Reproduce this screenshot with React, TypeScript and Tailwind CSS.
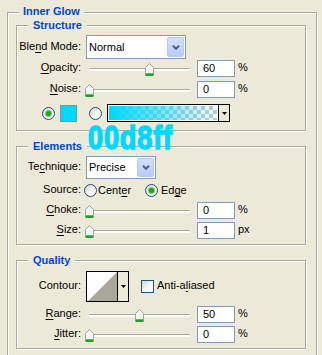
import React from "react";

const ETCH = "border border-[#ACA899] shadow-[inset_1px_1px_0_#fff,1px_1px_0_#fff]";

function Title({ children }: { children: React.ReactNode }) {
  return (
    <div className="absolute -top-[7px] left-[11px] px-[5px] bg-[#ECE9D8] font-bold text-[#0046D5] leading-[13px]">
      {children}
    </div>
  );
}

function Label({ children }: { children: React.ReactNode }) {
  return <div className="w-[64px] shrink-0 text-right mb-[2px]">{children}</div>;
}

function U({ children }: { children: React.ReactNode }) {
  return <span className="underline underline-offset-[2px]">{children}</span>;
}

function Chevron() {
  return (
    <svg width="8" height="5" viewBox="0 0 8 5">
      <polyline points="1,0.8 4,3.8 7,0.8" fill="none" stroke="#4D6185" strokeWidth="2" />
    </svg>
  );
}

function Select({ text, wide }: { text: string; wide: boolean }) {
  return (
    <div
      className={
        wide
          ? "ml-[5px] w-[100px] h-[24px] border border-[#7F9DB9] bg-white flex items-center justify-between pl-[2px] pr-[1px]"
          : "ml-[5px] w-[70px] h-[23px] border border-[#7F9DB9] bg-white flex items-center justify-between pl-[2px] pr-[1px]"
      }
    >
      <span>{text}</span>
      <div
        className={
          wide
            ? "w-[17px] h-[20px] rounded-[2px] border border-[#B4C7F6] bg-linear-to-b from-[#D3E0FE] to-[#B8CAF8] flex items-center justify-center"
            : "w-[17px] h-[19px] rounded-[2px] border border-[#B4C7F6] bg-linear-to-b from-[#D3E0FE] to-[#B8CAF8] flex items-center justify-center"
        }
      >
        <Chevron />
      </div>
    </div>
  );
}

function Thumb() {
  return (
    <svg width="9" height="13" viewBox="0 0 9 13">
      <path d="M0.5 4.5 L4.5 0.5 L8.5 4.5 L8.5 12.5 L0.5 12.5 Z" fill="#F4F4F0" stroke="#9AA6B3" />
      <path d="M1 10.5 H8" stroke="#49C849" />
      <path d="M0.5 11.5 H8.5 M1 12.5 H8" stroke="#21A121" />
    </svg>
  );
}

function Slider({ value }: { value: number }) {
  return (
    <div className="relative ml-[4px] w-[112px] h-[17px] shrink-0">
      <div className="mt-[8px] ml-[4px] w-[101px] h-[3px] border-t border-[#ACA899] bg-white rounded-[1px]" />
      <div className="absolute top-[3px] h-[13px]" style={{ left: value }}>
        <Thumb />
      </div>
    </div>
  );
}

function NumInput({ value }: { value: string }) {
  return (
    <div className="w-[38px] h-[17px] shrink-0 border border-[#7F9DB9] bg-white pl-[5px] flex items-center">
      {value}
    </div>
  );
}

function SliderRow({
  label,
  value,
  text,
  unit,
  cls,
}: {
  label: React.ReactNode;
  value: number;
  text: string;
  unit: string;
  cls: string;
}) {
  return (
    <div className={cls}>
      <Label>{label}</Label>
      <Slider value={value} />
      <NumInput value={text} />
      <span className="ml-[3px] mb-[2px]">{unit}</span>
    </div>
  );
}

function Radio({ checked }: { checked: boolean }) {
  return (
    <div className="w-[13px] h-[13px] shrink-0 rounded-full border border-[#1C5180] bg-linear-to-br from-[#D4D3CC] via-[#F4F4F0] to-white flex items-center justify-center">
      {checked ? <div className="w-[5px] h-[5px] rounded-full bg-[#21A121] shadow-[0_0_0_1px_#6ED46E]" /> : null}
    </div>
  );
}

function DownArrow() {
  return (
    <svg width="5" height="3" viewBox="0 0 5 3">
      <polygon points="0,0 5,0 2.5,3" fill="#000" />
    </svg>
  );
}

export default function App() {
  return (
    <div className="relative w-[322px] h-[355px] overflow-hidden bg-[#ECE9D8] pt-[12px] pl-[7px] text-[11px] leading-[13px] text-black font-['Liberation_Sans',Arial,sans-serif]">
      <div className={"relative w-[310px] h-[360px] pt-[12px] pl-[8px] " + ETCH}>
        <div className="absolute -top-[8px] left-[11px] px-[4px] bg-[#ECE9D8] font-bold text-[#0046D5] leading-[13px]">
          Inner Glow
        </div>

        {/* Structure */}
        <div className={"relative w-[290px] h-[106px] " + ETCH}>
          <Title>Structure</Title>
          <div className="flex flex-col">
            <div className="mt-[9px] h-[24px] flex items-center">
              <Label>
                Ble<U>n</U>d Mode:
              </Label>
              <Select text="Normal" wide={true} />
            </div>
            <SliderRow
              cls="mt-[1px] h-[17px] flex items-center"
              label={
                <>
                  <U>O</U>pacity:
                </>
              }
              value={60}
              text="60"
              unit="%"
            />
            <SliderRow
              cls="mt-[4px] h-[17px] flex items-center"
              label={
                <>
                  <U>N</U>oise:
                </>
              }
              value={0}
              text="0"
              unit="%"
            />
            <div className="mt-[6px] h-[18px] flex items-center pl-[25px]">
              <Radio checked={true} />
              <div className="ml-[5px] w-[17px] h-[17px] border border-[#8F8F8F] bg-[#00D8FF]" />
              <div className="ml-[12px]">
                <Radio checked={false} />
              </div>
              <div className="ml-[5px] w-[123px] h-[18px] border border-black flex">
                <div className="w-[110px] h-full border border-white bg-[image:conic-gradient(#C9C9C9_25%,#fff_0_50%,#C9C9C9_0_75%,#fff_0)] bg-[length:8px_8px]">
                  <div className="w-full h-full bg-linear-to-r from-[#00D8FF] via-[#00D8FF]/55 to-[#00D8FF]/5" />
                </div>
                <div className="w-[11px] h-full border-l border-black bg-[#ECE9D8] flex items-center justify-center">
                  <DownArrow />
                </div>
              </div>
            </div>
          </div>
        </div>

        {/* Elements */}
        <div className={"relative mt-[15px] w-[290px] h-[99px] " + ETCH}>
          <Title>Elements</Title>
          <div className="flex flex-col">
            <div className="mt-[9px] h-[23px] flex items-center">
              <Label>
                Te<U>c</U>hnique:
              </Label>
              <Select text="Precise" wide={false} />
            </div>
            <div className="mt-[5px] h-[13px] flex items-center">
              <Label>Source:</Label>
              <div className="ml-[3px] w-[61px] flex items-center">
                <Radio checked={false} />
                <span className="ml-[1px]">
                  Cent<U>e</U>r
                </span>
              </div>
              <Radio checked={true} />
              <span className="ml-[3px]">
                Ed<U>g</U>e
              </span>
            </div>
            <SliderRow
              cls="mt-[5px] h-[17px] flex items-center"
              label={
                <>
                  <U>C</U>hoke:
                </>
              }
              value={0}
              text="0"
              unit="%"
            />
            <SliderRow
              cls="mt-[3px] h-[17px] flex items-center"
              label={
                <>
                  <U>S</U>ize:
                </>
              }
              value={0}
              text="1"
              unit="px"
            />
          </div>
        </div>

        {/* Quality */}
        <div className={"relative mt-[15px] w-[290px] h-[89px] " + ETCH}>
          <Title>Quality</Title>
          <div className="flex flex-col">
            <div className="mt-[10px] h-[31px] flex items-center">
              <Label>Contour:</Label>
              <div className="ml-[5px] w-[43px] h-[31px] border border-black flex">
                <div className="w-[30px] h-full bg-white">
                  <svg width="30" height="29" viewBox="0 0 30 29" className="block">
                    <polygon points="1,29 30,0 30,29" fill="#ACA899" />
                  </svg>
                </div>
                <div className="w-[11px] h-full border-l border-black bg-[#ECE9D8] flex items-center justify-center">
                  <DownArrow />
                </div>
              </div>
              <div className="ml-[12px] w-[13px] h-[13px] border border-[#1C5180] bg-linear-to-br from-[#D4D3CC] via-[#F4F4F0] to-white" />
              <span className="ml-[3px] mb-[2px]">
                Anti-a<U>l</U>iased
              </span>
            </div>
            <SliderRow
              cls="mt-[4px] h-[17px] flex items-center"
              label={
                <>
                  <U>R</U>ange:
                </>
              }
              value={50}
              text="50"
              unit="%"
            />
            <SliderRow
              cls="mt-[3px] h-[17px] flex items-center"
              label={
                <>
                  <U>J</U>itter:
                </>
              }
              value={0}
              text="0"
              unit="%"
            />
          </div>
        </div>
      </div>

      <div className="absolute left-[88px] top-[120px] text-[34px] leading-none font-bold text-[#00D8FF] [-webkit-text-stroke:1.5px_#00D8FF] tracking-[1px] scale-x-[0.8] origin-left">
        00d8ff
      </div>
    </div>
  );
}
